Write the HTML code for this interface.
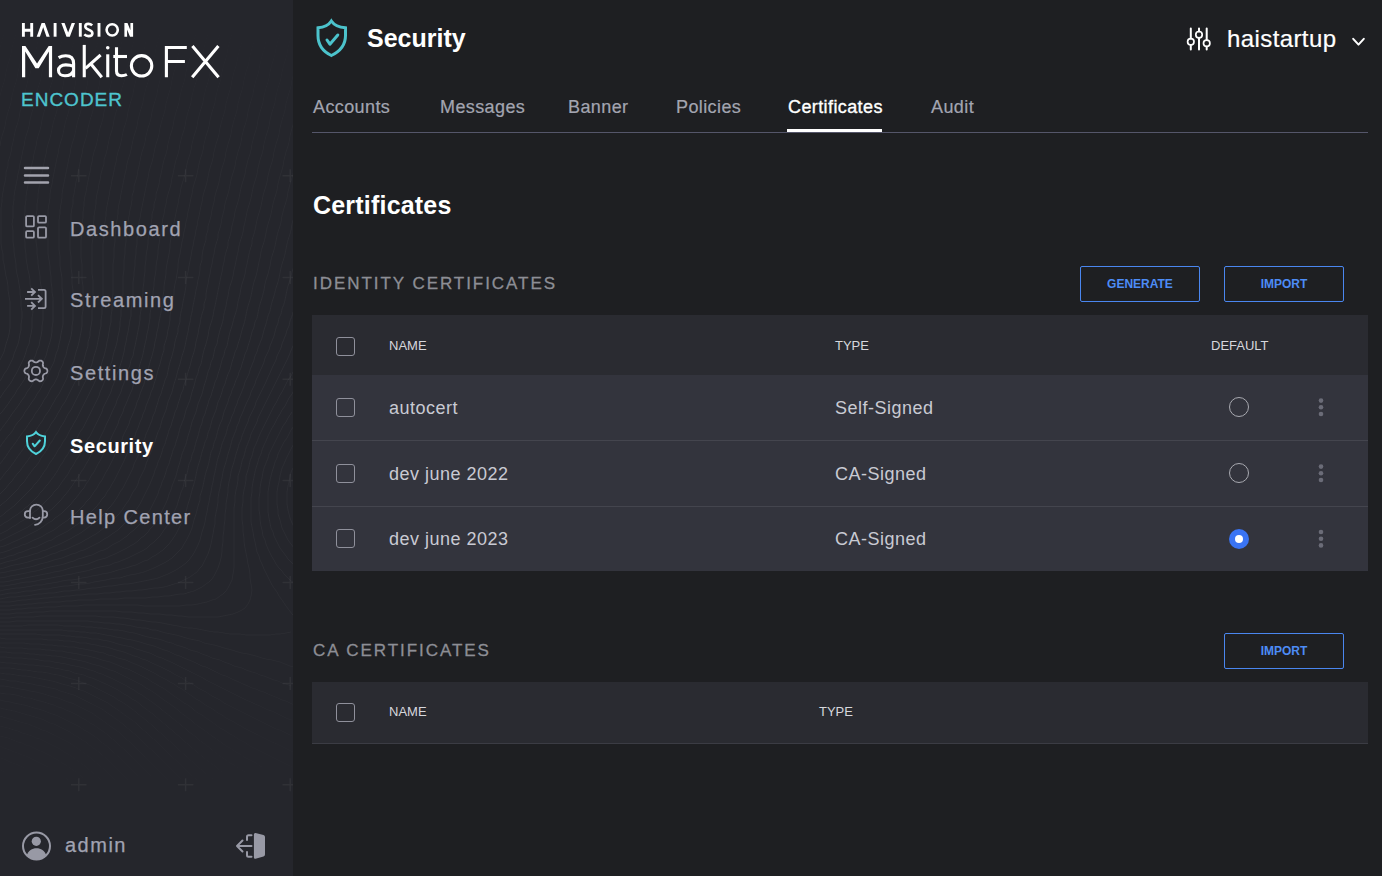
<!DOCTYPE html>
<html><head><meta charset="utf-8">
<style>
*{margin:0;padding:0;box-sizing:border-box;}
html,body{width:1382px;height:876px;overflow:hidden;background:#1e1f22;font-family:"Liberation Sans",sans-serif;}
.abs{position:absolute;}
#side{position:absolute;left:0;top:0;width:293px;height:876px;background:#25262c;overflow:hidden;}
.t{position:absolute;white-space:nowrap;line-height:1;}
.nav{color:#a1a3b2;font-size:20px;letter-spacing:1.6px;-webkit-text-stroke:0.25px #a1a3b2;}
.tab{color:#a3a5b1;font-size:18px;letter-spacing:0.4px;top:97.7px;-webkit-text-stroke:0.2px #a3a5b1;}
.hdr{color:#d6d7dd;font-size:13px;}
.cell{color:#c9cad3;font-size:18px;letter-spacing:0.5px;}
.cb{position:absolute;width:19px;height:19px;border:1.5px solid #8f909b;border-radius:3px;}
.btn{position:absolute;height:36px;border:1px solid #4a86ef;border-radius:2px;color:#4d8cf6;font-size:12px;font-weight:bold;text-align:center;line-height:34px;}
.sec{color:#8d8e95;font-size:17px;letter-spacing:1.95px;-webkit-text-stroke:0.3px #8d8e95;}
.radio{position:absolute;width:20px;height:20px;border-radius:50%;border:1.5px solid #a9aab1;}
</style></head>
<body>
<div id="side">
  <svg class="abs" style="left:0;top:0;" width="293" height="876" viewBox="0 0 293 876" fill="none">
    <defs><linearGradient id="tg" x1="0" y1="0" x2="0" y2="1"><stop offset="0" stop-color="#fff" stop-opacity="0"/><stop offset="0.17" stop-color="#fff" stop-opacity="0.6"/><stop offset="0.4" stop-color="#fff" stop-opacity="1"/><stop offset="0.7" stop-color="#fff" stop-opacity="0.8"/><stop offset="0.9" stop-color="#fff" stop-opacity="0.1"/><stop offset="1" stop-color="#fff" stop-opacity="0"/></linearGradient><mask id="tm"><rect width="293" height="876" fill="url(#tg)"/></mask></defs>
    <path d="M0 48 L1 44 L2 40 L4 34 L5 30 L6 24 L7 20 L8 16 L10 10 L11 6 L12 0 M0 96 L1 92 L2 88 L4 82 L5 78 L6 72 L7 68 L8 64 L10 58 L11 54 L12 48 L13 44 L14 40 L16 34 L17 30 L18 24 L19 20 L20 16 L22 10 L23 6 L24 0 M0 146 L1 140 L2 136 L4 130 L5 126 L6 120 L7 116 L8 112 L10 106 L11 102 L12 96 L13 92 L14 88 L16 82 L17 78 L18 72 L19 68 L20 64 L22 58 L23 54 L24 48 L25 44 L26 40 L28 34 L29 30 L30 24 L31 20 L32 16 L34 10 L35 6 L36 0 M0 360 L2 356 L4 352 L5 348 L6 344 L8 338 L9 334 L10 328 L10 324 L10 318 L10 312 L10 306 L10 302 L9 296 L8 290 L8 286 L7 280 L6 276 L5 270 L4 264 L3 260 L3 254 L2 250 L1 244 L1 238 L1 232 L1 226 L1 220 L1 214 L1 208 L2 202 L2 198 L3 192 L4 186 L5 182 L6 176 L6 172 L8 166 L8 162 L10 156 L11 152 L12 146 L13 142 L14 137 L15 132 L16 128 L18 122 L19 118 L20 112 L21 108 L22 104 L24 98 L25 94 L26 88 L27 84 L28 80 L30 74 L31 70 L32 64 L33 60 L34 56 L36 50 L37 46 L38 40 L39 36 L40 32 L42 26 L43 22 L44 16 L45 12 L46 8 L48 2 M0 381 L2 378 L4 374 L7 370 L9 366 L11 362 L13 358 L14 354 L16 349 L18 344 L19 340 L20 334 L21 330 L21 324 L22 318 L22 312 L21 306 L21 300 L20 294 L20 290 L19 284 L18 278 L17 274 L16 268 L16 264 L15 258 L14 252 L14 248 L13 242 L13 236 L13 230 L12 224 L13 218 L13 212 L13 206 L14 200 L14 196 L15 190 L16 185 L17 180 L18 174 L19 170 L20 164 L21 160 L22 155 L23 150 L24 146 L25 140 L26 136 L28 130 L29 126 L30 120 L31 116 L32 112 L34 106 L35 102 L36 96 L37 92 L38 88 L40 82 L41 78 L42 72 L43 68 L44 64 L46 58 L47 54 L48 48 L49 44 L50 40 L52 34 L53 30 L54 24 L55 20 L56 16 L58 10 L59 6 L60 0 M0 398 L2 395 L4 392 L7 388 L10 384 L12 381 L14 377 L16 374 L18 370 L20 366 L22 362 L24 358 L26 352 L27 348 L29 344 L30 338 L31 334 L32 328 L32 324 L32 318 L33 312 L32 306 L32 301 L32 296 L31 290 L30 284 L30 280 L29 274 L28 270 L27 264 L26 258 L26 254 L25 248 L25 242 L24 236 L24 230 L24 224 L24 218 L25 212 L25 206 L26 200 L26 196 L27 190 L28 185 L29 180 L30 174 L31 170 L32 164 L33 160 L34 154 L35 150 L36 146 L37 140 L38 136 L40 130 L41 126 L42 120 L43 116 L44 112 L46 106 L47 102 L48 96 L49 92 L50 88 L52 82 L53 78 L54 72 L55 68 L56 64 L58 58 L59 54 L60 48 L61 44 L62 40 L64 34 L65 30 L66 24 L67 20 L68 16 L70 10 L71 6 L72 0 M0 414 L2 412 L5 408 L8 404 L10 401 L12 398 L15 394 L17 390 L20 386 L22 383 L24 380 L26 376 L28 372 L30 368 L32 364 L34 359 L36 354 L37 350 L39 346 L40 340 L41 336 L42 330 L42 326 L43 320 L43 314 L43 308 L43 302 L42 296 L42 292 L41 286 L40 280 L40 276 L39 270 L38 264 L38 260 L37 254 L37 248 L36 242 L36 236 L36 232 L36 226 L36 222 L36 216 L37 210 L37 204 L38 198 L38 194 L39 188 L40 184 L41 178 L42 173 L43 168 L44 163 L45 158 L46 154 L47 148 L48 144 L50 138 L51 134 L52 129 L53 124 L54 120 L56 114 L57 110 L58 104 L59 100 L60 96 L62 90 L63 86 L64 80 L65 76 L66 72 L68 66 L69 62 L70 56 L71 52 L72 48 L74 42 L75 38 L76 32 L77 28 L78 24 L80 18 L81 14 L82 8 L83 4 L84 0 M0 431 L2 428 L5 424 L8 420 L10 417 L12 414 L15 410 L18 406 L20 403 L22 400 L25 396 L27 392 L30 388 L32 385 L34 381 L36 378 L38 374 L40 370 L42 365 L44 360 L46 356 L47 352 L48 348 L50 342 L51 338 L52 332 L52 328 L53 322 L53 316 L53 310 L53 304 L53 298 L52 292 L52 288 L51 282 L51 276 L50 270 L50 266 L49 260 L48 254 L48 248 L48 244 L48 238 L47 232 L48 226 L48 220 L48 216 L48 210 L49 204 L50 198 L50 194 L51 188 L52 184 L53 178 L54 173 L55 168 L56 163 L57 158 L58 154 L59 148 L60 144 L62 138 L63 134 L64 129 L65 124 L66 120 L68 114 L69 110 L70 104 L71 100 L72 96 L74 90 L75 86 L76 80 L77 76 L78 72 L80 66 L81 62 L82 56 L83 52 L84 48 L86 42 L87 38 L88 32 L89 28 L90 24 L92 18 L93 14 L94 8 L95 4 L96 0 M0 447 L2 444 L5 440 L8 436 L10 434 L13 430 L15 426 L18 422 L20 420 L23 416 L25 412 L28 408 L30 405 L32 402 L35 398 L37 394 L40 390 L42 386 L44 382 L46 379 L48 375 L50 370 L52 366 L54 362 L55 358 L56 354 L58 349 L59 344 L60 340 L61 334 L62 329 L63 324 L63 318 L63 312 L63 306 L63 300 L63 294 L62 288 L62 283 L62 278 L61 272 L60 266 L60 260 L60 256 L59 250 L59 244 L59 238 L59 232 L59 226 L59 220 L60 214 L60 210 L61 204 L62 198 L62 194 L63 188 L64 183 L65 178 L66 173 L67 168 L68 163 L69 158 L70 154 L71 148 L72 144 L74 138 L75 134 L76 129 L77 124 L78 120 L80 114 L81 110 L82 104 L83 100 L84 96 L86 90 L87 86 L88 80 L89 76 L90 72 L92 66 L93 62 L94 56 L95 52 L96 48 L98 42 L99 38 L100 32 L101 28 L102 24 L104 18 L105 14 L106 8 L107 4 L108 0 M0 464 L3 460 L6 456 L8 453 L10 450 L13 446 L16 442 L18 439 L20 436 L23 432 L26 428 L28 425 L30 422 L33 418 L35 414 L38 410 L40 407 L42 404 L44 400 L47 396 L49 392 L51 388 L54 384 L56 380 L58 376 L59 372 L61 368 L63 364 L64 360 L66 355 L67 350 L68 346 L70 340 L71 336 L72 330 L72 326 L73 320 L73 314 L73 308 L73 302 L73 296 L73 290 L72 284 L72 279 L72 274 L71 268 L71 262 L71 256 L70 250 L70 244 L70 238 L70 232 L71 226 L71 220 L71 214 L72 208 L73 204 L73 198 L74 194 L75 188 L76 182 L77 178 L78 172 L79 168 L80 163 L81 158 L82 154 L83 148 L84 144 L86 138 L87 134 L88 128 L89 124 L90 120 L92 114 L93 110 L94 104 L95 100 L96 96 L98 90 L99 86 L100 80 L101 76 L102 72 L104 66 L105 62 L106 56 L107 52 L108 48 L110 42 L111 38 L112 32 L113 28 L114 24 L116 18 L117 14 L118 8 L119 4 L120 0 M0 480 L3 476 L6 472 L8 470 L11 466 L14 462 L16 459 L18 456 L21 452 L24 448 L26 445 L28 442 L31 438 L33 434 L36 430 L38 427 L40 424 L43 420 L45 416 L48 412 L50 409 L52 405 L54 402 L56 398 L59 394 L61 390 L63 386 L65 382 L67 378 L68 374 L70 370 L72 365 L74 360 L75 356 L76 352 L78 346 L79 342 L80 337 L81 332 L82 326 L82 322 L82 316 L83 310 L83 304 L83 298 L83 292 L83 286 L82 280 L82 274 L82 270 L82 264 L81 258 L81 252 L81 246 L81 240 L82 234 L82 228 L82 224 L83 218 L83 212 L84 206 L84 202 L85 196 L86 192 L87 186 L88 181 L89 176 L90 172 L91 166 L92 162 L93 156 L94 152 L96 146 L97 142 L98 137 L99 132 L100 128 L102 122 L103 118 L104 112 L105 108 L106 104 L108 98 L109 94 L110 88 L111 84 L112 80 L114 74 L115 70 L116 64 L117 60 L118 56 L120 50 L121 46 L122 40 L123 36 L124 32 L126 26 L127 22 L128 16 L129 12 L130 8 L132 2 M0 494 L4 490 L6 488 L9 484 L12 481 L14 478 L17 474 L20 471 L22 468 L25 464 L28 460 L30 457 L32 454 L35 450 L37 446 L40 442 L42 439 L44 436 L46 432 L49 428 L51 424 L54 420 L56 417 L58 413 L60 410 L62 406 L65 402 L67 398 L69 394 L71 390 L73 386 L75 382 L77 378 L78 374 L80 370 L82 365 L84 360 L85 356 L86 352 L88 346 L88 342 L90 336 L90 332 L91 326 L92 320 L92 316 L92 310 L93 304 L93 298 L93 292 L93 286 L93 280 L92 274 L92 268 L92 262 L92 256 L92 250 L92 244 L93 238 L93 232 L93 226 L94 220 L94 216 L95 210 L96 204 L96 200 L97 194 L98 190 L99 184 L100 180 L101 174 L102 170 L104 164 L104 160 L106 154 L107 150 L108 145 L109 140 L110 136 L112 130 L113 126 L114 120 L115 116 L116 112 L118 106 L119 102 L120 96 L121 92 L122 88 L124 82 L125 78 L126 72 L127 68 L128 64 L130 58 L131 54 L132 48 L133 44 L134 40 L136 34 L137 30 L138 24 L139 20 L140 16 L142 10 L143 6 L144 0 M0 506 L2 504 L6 501 L9 498 L12 495 L15 492 L18 489 L20 486 L24 482 L26 479 L28 476 L31 472 L34 468 L36 466 L39 462 L41 458 L44 454 L46 451 L48 448 L50 444 L53 440 L55 436 L58 432 L60 428 L62 425 L64 422 L66 418 L68 414 L71 410 L73 406 L75 402 L77 398 L79 394 L81 390 L83 386 L85 382 L87 378 L88 374 L90 369 L92 364 L93 360 L94 356 L96 350 L97 346 L98 341 L99 336 L100 330 L101 326 L101 320 L102 314 L102 310 L102 304 L103 298 L103 292 L103 286 L103 280 L103 274 L103 268 L103 262 L103 256 L103 250 L103 244 L104 238 L104 234 L104 228 L105 222 L106 216 L106 212 L107 206 L108 201 L109 196 L110 190 L111 186 L112 180 L113 176 L114 171 L115 166 L116 162 L117 156 L118 152 L120 146 L121 142 L122 137 L123 132 L124 128 L126 122 L127 118 L128 112 L129 108 L130 104 L132 98 L133 94 L134 88 L135 84 L136 80 L138 74 L139 70 L140 64 L141 60 L142 56 L144 50 L145 46 L146 40 L147 36 L148 32 L150 26 L151 22 L152 16 L153 12 L154 8 L156 2 M0 517 L4 514 L6 512 L10 509 L14 506 L16 504 L20 500 L22 498 L26 494 L28 492 L32 488 L34 485 L37 482 L40 478 L42 475 L44 472 L47 468 L49 464 L52 460 L54 457 L56 454 L58 450 L61 446 L63 442 L66 438 L68 434 L70 430 L72 427 L74 423 L76 420 L78 416 L80 412 L82 408 L84 404 L86 400 L88 396 L90 392 L92 388 L94 384 L96 379 L98 374 L99 370 L101 366 L102 362 L104 356 L105 352 L106 348 L107 342 L108 338 L109 332 L110 326 L111 322 L111 316 L112 310 L112 306 L112 300 L113 294 L113 288 L113 282 L113 276 L113 270 L113 264 L114 258 L114 252 L114 248 L115 242 L115 236 L116 230 L116 226 L117 220 L118 214 L118 210 L119 204 L120 200 L121 194 L122 189 L123 184 L124 179 L125 174 L126 170 L127 164 L128 160 L130 154 L131 150 L132 145 L133 140 L134 136 L136 130 L137 126 L138 120 L139 116 L140 112 L142 106 L143 102 L144 96 L145 92 L146 88 L148 82 L149 78 L150 72 L151 68 L152 64 L154 58 L155 54 L156 48 L157 44 L158 40 L160 34 L161 30 L162 24 L163 20 L164 16 L166 10 L167 6 L168 0 M0 526 L4 523 L8 521 L12 518 L15 516 L18 514 L22 511 L25 508 L28 506 L32 502 L34 500 L38 496 L40 493 L43 490 L46 486 L48 484 L51 480 L54 476 L56 473 L58 470 L60 466 L63 462 L65 458 L68 454 L70 450 L72 447 L74 443 L76 440 L78 436 L80 432 L83 428 L85 424 L87 420 L89 416 L91 412 L93 408 L95 404 L97 400 L99 396 L100 392 L102 388 L104 383 L106 378 L108 374 L109 370 L110 366 L112 361 L113 356 L114 352 L116 346 L117 342 L118 336 L119 332 L120 326 L120 322 L121 316 L121 310 L122 304 L122 300 L123 294 L123 288 L123 282 L123 276 L124 270 L124 265 L124 260 L125 254 L125 248 L126 242 L126 238 L127 232 L127 226 L128 222 L129 216 L130 210 L131 206 L132 200 L132 196 L134 190 L134 186 L136 180 L137 176 L138 170 L139 166 L140 161 L141 156 L142 152 L144 146 L145 142 L146 136 L147 132 L148 128 L150 122 L151 118 L152 112 L153 108 L154 104 L156 98 L157 94 L158 88 L159 84 L160 80 L162 74 L163 70 L164 64 L165 60 L166 56 L168 50 L169 46 L170 40 L171 36 L172 32 L174 26 L175 22 L176 16 L177 12 L178 8 L180 2 M0 534 L4 532 L8 530 L12 527 L16 525 L20 522 L24 520 L27 518 L30 515 L34 512 L37 510 L40 507 L43 504 L46 501 L49 498 L52 495 L54 492 L58 488 L60 485 L62 482 L65 478 L68 474 L70 470 L72 467 L74 464 L76 460 L79 456 L81 452 L83 448 L85 444 L87 440 L90 436 L92 432 L94 428 L96 424 L98 420 L100 416 L102 412 L103 408 L105 404 L107 400 L109 396 L111 392 L112 388 L114 383 L116 378 L117 374 L119 370 L120 366 L122 360 L123 356 L124 352 L125 346 L126 342 L127 336 L128 332 L129 326 L130 320 L131 316 L131 310 L132 304 L132 300 L133 294 L133 288 L133 282 L134 276 L134 272 L135 266 L135 260 L136 254 L136 249 L137 244 L137 238 L138 232 L139 228 L139 222 L140 218 L141 212 L142 207 L143 202 L144 197 L145 192 L146 187 L147 182 L148 178 L149 172 L150 168 L152 162 L153 158 L154 153 L155 148 L156 144 L158 138 L159 134 L160 128 L161 124 L162 120 L164 114 L165 110 L166 104 L167 100 L168 96 L170 90 L171 86 L172 80 L173 76 L174 72 L176 66 L177 62 L178 56 L179 52 L180 48 L182 42 L183 38 L184 32 L185 28 L186 24 L188 18 L189 14 L190 8 L191 4 L192 0 M0 541 L4 539 L8 537 L12 535 L16 533 L20 531 L24 529 L28 527 L32 524 L35 522 L38 520 L42 517 L46 514 L48 512 L52 509 L55 506 L58 503 L61 500 L64 496 L66 494 L69 490 L72 486 L74 483 L76 480 L79 476 L81 472 L84 468 L86 464 L88 461 L90 457 L92 453 L94 449 L96 446 L98 442 L100 438 L102 434 L104 430 L106 425 L108 421 L110 417 L112 412 L114 408 L116 404 L117 400 L119 396 L121 392 L122 388 L124 383 L126 378 L127 374 L128 370 L130 365 L131 360 L133 356 L134 350 L135 346 L136 341 L137 336 L138 331 L139 326 L140 320 L140 316 L141 310 L142 304 L142 300 L143 294 L143 288 L144 282 L144 278 L145 272 L145 266 L146 260 L146 256 L147 250 L148 244 L148 240 L149 234 L150 228 L151 224 L152 218 L152 214 L154 208 L154 204 L156 198 L156 194 L158 188 L159 184 L160 178 L161 174 L162 169 L163 164 L164 160 L166 154 L167 150 L168 144 L169 140 L170 136 L172 130 L173 126 L174 120 L175 116 L176 112 L178 106 L179 102 L180 96 L181 92 L182 88 L184 82 L185 78 L186 72 L187 68 L188 64 L190 58 L191 54 L192 48 L193 44 L194 40 L196 34 L197 30 L198 24 L199 20 L200 16 L202 10 L203 6 L204 0 M0 547 L4 546 L9 544 L13 542 L18 540 L22 538 L26 536 L30 534 L34 532 L38 530 L41 528 L44 526 L48 523 L52 521 L55 518 L58 516 L62 513 L65 510 L68 507 L71 504 L74 500 L76 498 L79 494 L82 490 L84 488 L86 484 L89 480 L91 476 L94 472 L96 468 L98 464 L100 461 L102 457 L104 453 L106 449 L108 445 L110 441 L112 436 L114 432 L116 428 L118 424 L119 420 L121 416 L123 412 L124 408 L126 404 L128 399 L130 394 L132 390 L133 386 L134 382 L136 377 L138 372 L139 368 L140 364 L142 358 L143 354 L144 349 L145 344 L146 340 L147 334 L148 330 L149 324 L150 318 L150 314 L151 308 L152 302 L153 298 L153 292 L154 286 L154 282 L155 276 L156 270 L156 266 L157 260 L158 254 L158 250 L159 244 L160 238 L161 234 L162 228 L162 224 L163 218 L164 214 L165 208 L166 204 L167 198 L168 194 L170 188 L171 184 L172 178 L173 174 L174 169 L175 164 L176 160 L178 154 L179 150 L180 144 L181 140 L182 136 L184 130 L185 126 L186 120 L187 116 L188 112 L190 106 L191 102 L192 96 L193 92 L194 88 L196 82 L197 78 L198 72 L199 68 L200 64 L202 58 L203 54 L204 48 L205 44 L206 40 L208 34 L209 30 L210 24 L211 20 L212 16 L214 10 L215 6 L216 0 M0 553 L4 552 L10 550 L14 548 L18 547 L22 545 L26 544 L30 542 L34 540 L39 538 L43 536 L46 534 L50 532 L54 530 L58 527 L62 524 L65 522 L68 520 L72 516 L75 514 L78 511 L81 508 L84 505 L86 502 L90 498 L92 495 L94 492 L97 488 L99 484 L102 480 L104 476 L106 472 L108 469 L110 465 L112 461 L114 457 L116 452 L118 448 L120 444 L122 440 L123 436 L125 432 L127 428 L129 424 L130 420 L132 416 L134 411 L136 406 L137 402 L139 398 L140 394 L142 389 L144 384 L145 380 L146 376 L148 371 L149 366 L150 362 L152 356 L153 352 L154 348 L155 342 L156 338 L157 332 L158 328 L159 322 L160 317 L161 312 L162 306 L162 302 L163 296 L164 290 L164 286 L165 280 L166 274 L166 270 L167 264 L168 259 L169 254 L170 248 L170 244 L171 238 L172 234 L173 228 L174 223 L175 218 L176 213 L177 208 L178 204 L179 198 L180 194 L181 188 L182 184 L184 178 L185 174 L186 169 L187 164 L188 160 L190 154 L191 150 L192 144 L193 140 L194 136 L196 130 L197 126 L198 120 L199 116 L200 112 L202 106 L203 102 L204 96 L205 92 L206 88 L208 82 L209 78 L210 72 L211 68 L212 64 L214 58 L215 54 L216 48 L217 44 L218 40 L220 34 L221 30 L222 24 L223 20 L224 16 L226 10 L227 6 L228 0 M0 559 L4 558 L9 556 L14 555 L18 553 L22 552 L27 550 L32 548 L36 547 L40 545 L44 543 L48 541 L52 540 L56 537 L60 535 L64 533 L68 531 L72 528 L75 526 L78 524 L82 521 L85 518 L88 515 L91 512 L94 509 L97 506 L100 502 L102 499 L105 496 L107 492 L110 488 L112 484 L114 481 L116 477 L118 473 L120 469 L122 465 L124 461 L126 456 L128 452 L130 448 L131 444 L133 440 L135 436 L136 432 L138 428 L140 422 L142 418 L143 414 L145 410 L146 406 L148 401 L150 396 L151 392 L153 388 L154 384 L156 378 L157 374 L158 370 L160 364 L161 360 L162 356 L164 350 L164 346 L166 340 L167 336 L168 330 L169 326 L170 320 L170 316 L171 310 L172 306 L173 300 L174 294 L174 290 L175 284 L176 280 L177 274 L178 268 L178 264 L179 258 L180 254 L181 248 L182 242 L183 238 L184 232 L185 228 L186 222 L187 218 L188 212 L189 208 L190 203 L191 198 L192 194 L193 188 L194 184 L196 178 L197 174 L198 169 L199 164 L200 160 L202 154 L203 150 L204 144 L205 140 L206 136 L208 130 L209 126 L210 120 L211 116 L212 112 L214 106 L215 102 L216 96 L217 92 L218 88 L220 82 L221 78 L222 72 L223 68 L224 64 L226 58 L227 54 L228 48 L229 44 L230 40 L232 34 L233 30 L234 24 L235 20 L236 16 L238 10 L239 6 L240 0 M0 564 L6 562 L10 561 L15 560 L20 558 L24 557 L28 556 L34 554 L38 553 L42 551 L46 550 L50 548 L55 546 L60 544 L64 542 L68 540 L72 538 L75 536 L79 534 L82 532 L86 529 L90 526 L93 524 L96 522 L100 518 L102 516 L106 512 L108 509 L111 506 L114 502 L116 499 L118 496 L120 492 L123 488 L125 484 L127 480 L129 476 L131 472 L133 468 L134 464 L136 460 L138 456 L140 451 L142 446 L143 442 L145 438 L146 434 L148 430 L150 425 L152 420 L153 416 L155 412 L156 408 L158 402 L159 398 L161 394 L162 390 L164 384 L165 380 L167 376 L168 371 L169 366 L170 362 L172 356 L173 352 L174 348 L175 342 L176 338 L178 332 L178 328 L180 322 L180 318 L181 312 L182 308 L183 302 L184 297 L185 292 L186 286 L186 282 L187 276 L188 272 L189 266 L190 261 L191 256 L192 250 L193 246 L194 240 L195 236 L196 230 L197 226 L198 220 L199 216 L200 211 L201 206 L202 202 L203 196 L204 192 L206 186 L207 182 L208 177 L209 172 L210 168 L212 162 L213 158 L214 152 L215 148 L216 144 L218 138 L219 134 L220 128 L221 124 L222 120 L224 114 L225 110 L226 104 L227 100 L228 96 L230 90 L231 86 L232 80 L233 76 L234 72 L236 66 L237 62 L238 56 L239 52 L240 48 L242 42 L243 38 L244 32 L245 28 L246 24 L248 18 L249 14 L250 8 L251 4 L252 0 M0 569 L4 568 L10 566 L14 565 L20 564 L24 563 L28 562 L34 560 L38 559 L42 558 L47 556 L52 554 L56 553 L60 551 L64 550 L69 548 L73 546 L78 544 L82 542 L85 540 L89 538 L92 536 L96 534 L100 531 L104 528 L106 526 L110 523 L113 520 L116 517 L119 514 L122 510 L124 507 L126 504 L129 500 L131 496 L133 492 L136 488 L138 484 L139 480 L141 476 L143 472 L145 468 L146 464 L148 459 L150 454 L152 450 L153 446 L155 442 L156 438 L158 432 L160 428 L161 424 L162 420 L164 415 L166 410 L167 406 L168 402 L170 397 L172 392 L173 388 L174 384 L176 378 L177 374 L178 370 L180 364 L181 360 L182 356 L184 350 L185 346 L186 341 L187 336 L188 332 L189 326 L190 322 L191 316 L192 312 L193 306 L194 301 L195 296 L196 290 L197 286 L198 280 L199 276 L200 270 L200 266 L202 260 L202 256 L203 250 L204 246 L206 240 L206 236 L208 230 L208 226 L210 220 L211 216 L212 210 L213 206 L214 202 L215 196 L216 192 L218 186 L219 182 L220 177 L221 172 L222 168 L224 162 L225 158 L226 152 L227 148 L228 144 L230 138 L231 134 L232 128 L233 124 L234 120 L236 114 L237 110 L238 104 L239 100 L240 96 L242 90 L243 86 L244 80 L245 76 L246 72 L248 66 L249 62 L250 56 L251 52 L252 48 L254 42 L255 38 L256 32 L257 28 L258 24 L260 18 L261 14 L262 8 L263 4 L264 0 M0 573 L6 572 L10 571 L16 570 L20 569 L25 568 L30 567 L34 566 L40 564 L44 563 L48 562 L54 560 L58 559 L62 558 L67 556 L72 554 L76 553 L80 551 L84 550 L88 548 L92 546 L96 544 L100 542 L104 539 L108 537 L112 534 L115 532 L118 530 L122 526 L124 524 L128 520 L130 518 L133 514 L136 510 L138 507 L140 504 L142 500 L144 496 L146 492 L148 488 L150 484 L152 479 L154 474 L155 470 L157 466 L158 462 L160 458 L162 452 L163 448 L165 444 L166 440 L168 434 L169 430 L171 426 L172 422 L174 416 L175 412 L177 408 L178 404 L180 398 L181 394 L183 390 L184 385 L186 380 L187 376 L188 372 L190 366 L191 362 L192 358 L194 352 L195 348 L196 342 L197 338 L198 334 L199 328 L200 324 L201 318 L202 314 L204 308 L204 304 L206 298 L206 294 L207 288 L208 284 L209 278 L210 274 L211 268 L212 264 L213 258 L214 254 L215 248 L216 244 L218 238 L218 234 L220 228 L221 224 L222 218 L223 214 L224 210 L225 204 L226 200 L228 194 L229 190 L230 185 L231 180 L232 176 L234 170 L235 166 L236 160 L237 156 L238 152 L240 146 L241 142 L242 136 L243 132 L244 128 L246 122 L247 118 L248 112 L249 108 L250 104 L252 98 L253 94 L254 88 L255 84 L256 80 L258 74 L259 70 L260 64 L261 60 L262 56 L264 50 L265 46 L266 40 L267 36 L268 32 L270 26 L271 22 L272 16 L273 12 L274 8 L276 2 M0 578 L6 577 L10 576 L16 575 L21 574 L26 573 L30 572 L36 571 L40 570 L46 568 L50 567 L55 566 L60 565 L64 564 L70 562 L74 561 L78 559 L82 558 L88 556 L92 555 L96 553 L100 551 L104 550 L108 548 L112 545 L116 543 L120 541 L124 538 L127 536 L130 533 L134 530 L136 528 L140 524 L142 521 L144 518 L147 514 L150 510 L152 506 L154 502 L156 498 L158 494 L159 490 L161 486 L162 482 L164 478 L166 472 L167 468 L169 464 L170 460 L172 454 L173 450 L175 446 L176 442 L178 436 L179 432 L180 428 L182 423 L184 418 L185 414 L186 410 L188 405 L190 400 L191 396 L192 392 L194 386 L195 382 L196 378 L198 373 L199 368 L201 364 L202 359 L203 354 L204 350 L206 344 L207 340 L208 336 L209 330 L210 326 L212 320 L213 316 L214 310 L215 306 L216 301 L217 296 L218 291 L219 286 L220 281 L221 276 L222 272 L223 266 L224 262 L225 256 L226 252 L228 246 L228 242 L230 236 L231 232 L232 226 L233 222 L234 218 L235 212 L236 208 L238 202 L239 198 L240 193 L241 188 L242 184 L244 178 L245 174 L246 168 L247 164 L248 160 L250 154 L251 150 L252 144 L253 140 L254 136 L256 130 L257 126 L258 120 L259 116 L260 112 L262 106 L263 102 L264 96 L265 92 L266 88 L268 82 L269 78 L270 72 L271 68 L272 64 L274 58 L275 54 L276 48 L277 44 L278 40 L280 34 L281 30 L282 24 L283 20 L284 16 L286 10 L287 6 L288 0 M0 582 L4 582 L10 581 L14 580 L20 579 L25 578 L30 577 L35 576 L40 575 L45 574 L50 573 L54 572 L60 571 L64 570 L70 568 L74 567 L79 566 L84 565 L88 564 L93 562 L98 560 L102 559 L106 558 L110 556 L115 554 L119 552 L123 550 L127 548 L130 546 L134 544 L138 541 L141 538 L144 536 L148 532 L150 529 L153 526 L156 522 L158 518 L160 515 L162 511 L164 507 L166 503 L168 498 L169 494 L171 490 L172 486 L174 481 L176 476 L177 472 L178 468 L180 462 L181 458 L182 454 L184 449 L186 444 L187 440 L188 436 L190 430 L191 426 L192 422 L194 417 L196 412 L197 408 L198 404 L200 399 L202 394 L203 390 L204 386 L206 380 L207 376 L208 372 L210 367 L211 362 L213 358 L214 353 L215 348 L217 344 L218 338 L219 334 L220 330 L222 324 L223 320 L224 314 L225 310 L226 306 L227 300 L228 296 L229 290 L230 286 L232 280 L233 276 L234 270 L235 266 L236 261 L237 256 L238 252 L239 246 L240 242 L242 236 L243 232 L244 226 L245 222 L246 217 L247 212 L248 208 L250 202 L251 198 L252 193 L253 188 L254 184 L256 178 L257 174 L258 168 L259 164 L260 160 L262 154 L263 150 L264 144 L265 140 L266 136 L268 130 L269 126 L270 120 L271 116 L272 112 L274 106 L275 102 L276 96 L277 92 L278 88 L280 82 L281 78 L282 72 L283 68 L284 64 L286 58 L287 54 L288 48 L289 44 L290 40 L292 34 L293 30 L294 24 M0 586 L4 586 L10 585 L16 584 L20 583 L26 582 L30 582 L36 581 L40 580 L46 579 L51 578 L56 577 L62 576 L66 575 L72 574 L76 573 L81 572 L86 571 L90 570 L96 568 L100 567 L105 566 L110 565 L114 563 L118 562 L123 560 L128 558 L132 556 L136 554 L140 552 L144 550 L147 548 L150 545 L154 542 L156 540 L160 536 L162 533 L164 530 L167 526 L169 522 L171 518 L173 514 L175 510 L177 506 L178 502 L180 496 L181 492 L183 488 L184 483 L185 478 L187 474 L188 469 L189 464 L191 460 L192 455 L194 450 L195 446 L196 442 L198 436 L199 432 L200 428 L202 423 L203 418 L205 414 L206 410 L208 404 L209 400 L211 396 L212 392 L214 386 L215 382 L217 378 L218 374 L220 368 L221 364 L222 360 L224 355 L225 350 L227 346 L228 341 L229 336 L230 332 L232 326 L233 322 L234 318 L236 312 L237 308 L238 302 L239 298 L240 294 L241 288 L242 284 L244 278 L245 274 L246 268 L247 264 L248 259 L249 254 L250 250 L252 244 L252 240 L254 234 L255 230 L256 225 L257 220 L258 216 L260 210 L261 206 L262 201 L263 196 L264 192 L266 186 L267 182 L268 176 L269 172 L270 168 L272 162 L273 158 L274 152 L275 148 L276 144 L278 138 L279 134 L280 128 L281 124 L282 120 L284 114 L285 110 L286 104 L287 100 L288 96 L290 90 L291 86 L292 80 L293 76 M0 591 L4 590 L10 589 L16 588 L20 588 L26 587 L32 586 L36 585 L42 585 L46 584 L52 583 L58 582 L62 581 L68 580 L72 580 L78 579 L82 578 L88 577 L92 576 L98 575 L102 574 L108 573 L112 572 L118 570 L122 569 L126 568 L132 566 L136 565 L140 563 L144 561 L148 560 L152 557 L156 555 L160 552 L163 550 L166 547 L169 544 L172 540 L174 537 L176 534 L178 530 L180 526 L182 522 L184 517 L186 512 L187 508 L188 504 L190 498 L191 494 L192 490 L194 484 L195 480 L196 475 L197 470 L198 466 L200 460 L201 456 L202 452 L204 446 L205 442 L207 438 L208 433 L210 428 L211 424 L212 420 L214 415 L216 410 L217 406 L218 402 L220 398 L222 392 L223 388 L225 384 L226 380 L228 374 L230 370 L231 366 L232 362 L234 356 L235 352 L237 348 L238 344 L240 338 L241 334 L242 330 L244 324 L245 320 L246 315 L247 310 L248 306 L250 300 L251 296 L252 291 L253 286 L254 282 L256 276 L257 272 L258 267 L259 262 L260 258 L261 252 L262 248 L264 242 L265 238 L266 233 L267 228 L268 224 L270 218 L271 214 L272 209 L273 204 L274 200 L276 194 L277 190 L278 184 L279 180 L280 176 L282 170 L283 166 L284 160 L285 156 L286 152 L288 146 L289 142 L290 136 L291 132 L292 128 L294 122 M0 595 L5 594 L10 593 L16 593 L21 592 L26 591 L32 591 L37 590 L42 589 L48 589 L52 588 L58 587 L64 586 L68 586 L74 585 L80 584 L84 584 L90 583 L94 582 L100 581 L106 580 L110 579 L116 578 L120 578 L126 576 L130 575 L136 574 L140 573 L144 572 L149 570 L154 568 L158 566 L162 564 L166 562 L169 560 L172 558 L176 554 L178 552 L182 548 L184 544 L186 541 L188 537 L190 533 L192 528 L193 524 L194 520 L196 514 L197 510 L198 506 L200 500 L200 496 L202 490 L203 486 L204 481 L205 476 L206 472 L208 466 L209 462 L210 457 L211 452 L213 448 L214 443 L216 438 L217 434 L218 430 L220 424 L222 420 L223 416 L224 412 L226 407 L228 402 L229 398 L231 394 L232 390 L234 386 L236 380 L238 376 L239 372 L241 368 L242 364 L244 358 L245 354 L247 350 L248 346 L250 340 L251 336 L252 332 L254 327 L255 322 L257 318 L258 313 L259 308 L260 304 L262 298 L263 294 L264 290 L265 284 L266 280 L268 274 L269 270 L270 266 L271 260 L272 256 L274 250 L275 246 L276 241 L277 236 L278 232 L280 226 L281 222 L282 216 L283 212 L284 208 L286 202 L287 198 L288 192 L289 188 L290 184 L292 178 L293 174 L294 168 M0 599 L5 598 L10 597 L16 597 L22 596 L26 596 L32 595 L38 594 L42 594 L48 593 L54 593 L59 592 L64 591 L70 591 L76 590 L80 590 L86 589 L92 588 L96 588 L102 587 L108 586 L112 586 L118 585 L124 584 L128 584 L134 583 L139 582 L144 581 L149 580 L154 579 L158 578 L163 576 L168 574 L172 572 L176 570 L179 568 L182 566 L186 563 L189 560 L192 556 L194 553 L196 549 L198 545 L200 540 L201 536 L202 532 L204 526 L205 522 L206 516 L207 512 L208 506 L209 502 L210 496 L211 492 L212 486 L213 482 L214 476 L215 472 L216 467 L217 462 L218 458 L220 452 L221 448 L222 444 L224 439 L226 434 L227 430 L228 426 L230 422 L232 416 L234 412 L235 408 L237 404 L238 400 L240 396 L242 391 L244 386 L245 382 L247 378 L249 374 L250 370 L252 365 L254 360 L255 356 L257 352 L258 348 L260 343 L262 338 L263 334 L264 330 L266 324 L267 320 L268 316 L270 311 L271 306 L272 302 L274 296 L275 292 L276 288 L278 282 L279 278 L280 273 L281 268 L282 264 L284 258 L285 254 L286 249 L287 244 L288 240 L290 234 L291 230 L292 224 L293 220 M0 602 L5 602 L10 602 L16 601 L22 600 L26 600 L32 599 L38 599 L44 598 L48 598 L54 597 L60 597 L66 596 L70 596 L76 595 L82 595 L88 594 L93 594 L98 594 L104 593 L110 593 L116 592 L120 592 L126 591 L132 591 L138 590 L142 590 L148 589 L154 588 L158 588 L164 587 L168 586 L174 584 L178 583 L182 581 L186 579 L190 577 L194 574 L197 572 L200 568 L202 566 L204 562 L206 558 L208 554 L210 548 L211 544 L212 539 L213 534 L214 528 L215 524 L215 518 L216 513 L217 508 L218 502 L218 498 L219 492 L220 488 L221 482 L222 478 L223 472 L224 468 L226 462 L227 458 L228 454 L230 448 L231 444 L232 440 L234 435 L236 430 L237 426 L239 422 L240 418 L242 414 L244 409 L246 404 L248 400 L250 396 L251 392 L253 388 L255 384 L256 380 L258 376 L260 371 L262 367 L264 362 L265 358 L267 354 L269 350 L270 346 L272 341 L274 336 L275 332 L276 328 L278 323 L279 318 L281 314 L282 309 L284 304 L285 300 L286 295 L287 290 L288 286 L290 280 L291 276 L292 272 L294 266 M0 606 L4 606 L10 606 L16 605 L22 605 L28 604 L32 604 L38 603 L44 603 L50 602 L55 602 L60 602 L66 601 L72 601 L78 600 L84 600 L88 600 L94 600 L100 599 L106 599 L112 599 L118 599 L124 598 L130 598 L136 598 L140 598 L146 598 L152 597 L158 597 L164 596 L169 596 L174 595 L180 594 L184 594 L190 592 L194 591 L198 589 L202 587 L206 584 L209 582 L212 579 L214 576 L216 572 L218 568 L220 562 L221 558 L222 552 L222 548 L223 542 L223 536 L224 530 L224 526 L225 520 L225 514 L226 508 L226 504 L227 498 L228 492 L228 488 L229 482 L230 478 L231 472 L232 468 L234 462 L235 458 L236 454 L238 448 L239 444 L241 440 L242 436 L244 431 L246 426 L248 422 L249 418 L251 414 L253 410 L255 406 L256 402 L258 398 L260 394 L262 390 L264 386 L266 382 L268 377 L270 373 L272 368 L274 364 L276 360 L277 356 L279 352 L281 348 L282 344 L284 339 L286 334 L287 330 L289 326 L290 321 L292 316 L293 312 M0 610 L4 610 L10 610 L16 609 L22 609 L28 608 L33 608 L38 608 L44 607 L50 607 L56 607 L62 606 L68 606 L72 606 L78 606 L84 605 L90 605 L96 605 L102 605 L108 605 L114 605 L120 605 L126 605 L132 605 L138 605 L144 606 L150 606 L156 606 L162 606 L168 606 L174 606 L180 606 L186 605 L192 605 L198 604 L202 603 L207 602 L212 600 L216 599 L220 596 L223 594 L226 591 L228 588 L230 584 L232 580 L233 574 L234 568 L234 564 L234 558 L234 552 L234 548 L234 542 L234 536 L234 530 L234 524 L234 518 L234 512 L234 508 L235 502 L235 496 L236 490 L237 486 L238 480 L238 476 L240 470 L241 466 L242 461 L244 456 L245 452 L246 448 L248 443 L250 438 L251 434 L253 430 L255 426 L257 422 L258 418 L260 414 L262 410 L264 406 L266 402 L268 398 L270 394 L272 390 L274 386 L276 382 L278 378 L280 374 L282 370 L284 366 L286 362 L288 358 L290 353 L292 348 L294 344 M0 614 L4 614 L10 614 L16 613 L22 613 L28 613 L34 612 L39 612 L44 612 L50 611 L56 611 L62 611 L68 611 L74 611 L80 611 L86 611 L92 611 L98 611 L104 611 L110 611 L116 611 L122 612 L128 612 L132 612 L138 613 L144 613 L150 614 L155 614 L160 614 L166 615 L172 615 L178 616 L182 616 L188 617 L194 617 L200 617 L206 617 L212 617 L218 617 L223 616 L228 615 L233 614 L238 612 L242 610 L245 608 L248 604 L250 600 L251 596 L252 590 L251 584 L250 578 L250 574 L249 568 L248 564 L247 558 L246 553 L245 548 L244 542 L244 538 L243 532 L243 526 L242 520 L242 514 L242 508 L243 502 L243 496 L244 490 L245 486 L246 480 L246 476 L248 470 L249 466 L250 461 L252 456 L253 452 L254 448 L256 444 L258 439 L260 434 L262 430 L264 426 L266 422 L268 418 L270 414 L272 410 L274 406 L276 403 L278 399 L280 395 L282 392 L284 388 L286 384 L288 380 L291 376 L293 372 M294 616 L292 614 L289 610 L286 606 L284 603 L282 600 L279 596 L277 592 L274 588 L272 585 L270 581 L268 577 L266 573 L264 569 L262 564 L260 560 L259 556 L257 552 L256 547 L255 542 L254 538 L253 532 L252 527 L251 522 L251 516 L251 510 L251 504 L251 498 L252 492 L252 488 L253 482 L254 477 L255 472 L256 468 L258 462 L259 458 L261 454 L262 450 L264 445 L266 441 L268 436 L270 432 L272 428 L274 425 L276 421 L278 417 L280 414 L282 410 L285 406 L287 402 L289 398 L292 394 L294 390 M0 618 L4 618 L10 618 L16 617 L22 617 L28 617 L34 617 L40 616 L46 616 L52 616 L56 616 L62 616 L68 616 L74 616 L80 616 L86 616 L90 616 L96 616 L102 617 L108 617 L114 617 L120 618 L124 618 L130 619 L136 620 L140 620 L146 621 L152 622 L156 622 L162 623 L167 624 L172 625 L178 626 L182 627 L188 628 L192 628 L198 629 L203 630 L208 631 L214 632 L218 632 L224 633 L230 634 L234 634 L240 634 L246 635 L252 635 L258 635 L264 635 L270 635 L276 634 L280 634 L286 633 L291 632 M294 583 L290 580 L288 578 L284 574 L282 571 L279 568 L276 564 L274 560 L272 557 L270 553 L268 549 L266 544 L265 540 L263 536 L262 530 L261 526 L260 520 L260 516 L259 510 L259 504 L259 498 L260 492 L260 488 L261 482 L262 478 L263 472 L264 468 L266 463 L268 458 L269 454 L271 450 L273 446 L275 442 L277 438 L279 434 L281 430 L283 426 L286 422 L288 418 L290 415 L292 412 M0 622 L4 622 L10 622 L16 621 L22 621 L28 621 L34 621 L40 621 L46 621 L52 621 L58 621 L64 621 L70 621 L76 621 L82 621 L88 621 L94 622 L98 622 L104 623 L110 623 L116 624 L120 624 L126 625 L132 626 L136 627 L142 628 L146 628 L152 630 L156 630 L162 632 L166 633 L171 634 L176 635 L180 636 L186 638 L190 639 L195 640 L200 641 L204 643 L209 644 L214 645 L218 646 L224 648 L228 649 L232 650 L238 652 L242 653 L248 654 L252 655 L256 656 L262 658 L266 659 L272 660 L276 661 L280 662 L285 664 L290 666 L294 667 M294 565 L291 562 L288 559 L286 556 L283 552 L280 548 L278 544 L276 540 L274 536 L273 532 L271 528 L270 523 L269 518 L268 512 L268 508 L268 502 L268 496 L268 492 L269 486 L270 480 L271 476 L272 472 L274 466 L275 462 L277 458 L278 454 L280 450 L282 446 L284 442 L287 438 L289 434 L291 430 L294 426 M0 626 L4 626 L10 626 L16 626 L22 626 L28 625 L34 625 L40 625 L46 625 L52 625 L58 625 L64 626 L70 626 L75 626 L80 626 L86 627 L92 627 L98 628 L102 628 L108 629 L114 630 L118 630 L124 631 L128 632 L134 633 L138 634 L144 636 L148 637 L153 638 L158 639 L162 640 L167 642 L172 643 L176 645 L180 646 L186 648 L190 650 L194 651 L198 652 L202 654 L208 656 L212 658 L216 659 L220 660 L224 662 L230 664 L234 666 L238 667 L242 668 L246 670 L252 672 L256 673 L260 675 L264 676 L269 678 L274 680 L278 681 L282 683 L286 684 L291 686 M294 548 L291 544 L288 540 L286 536 L284 532 L282 528 L281 524 L280 520 L278 514 L278 510 L277 504 L277 498 L277 492 L278 486 L279 482 L280 476 L281 472 L282 468 L284 464 L286 459 L288 455 L290 451 L292 447 L294 444 M0 630 L6 630 L10 630 L16 630 L22 630 L28 630 L34 630 L40 630 L46 630 L50 630 L56 630 L62 630 L68 631 L74 631 L80 632 L85 632 L90 633 L96 633 L101 634 L106 635 L112 636 L116 637 L122 638 L126 639 L132 640 L136 641 L140 642 L146 644 L150 645 L154 646 L159 648 L164 650 L168 651 L172 653 L176 655 L180 656 L184 658 L189 660 L194 662 L198 664 L202 666 L206 667 L210 669 L214 671 L218 673 L222 675 L226 676 L230 678 L234 680 L239 682 L243 684 L248 686 L252 688 L256 689 L260 691 L264 692 L268 694 L273 696 L278 698 L282 700 L286 701 L290 703 L294 705 M294 527 L292 523 L290 518 L289 514 L288 510 L287 504 L287 498 L287 492 L288 486 L289 482 L290 476 L291 472 L293 468 M0 634 L6 634 L12 634 L18 634 L24 634 L30 634 L36 634 L42 635 L48 635 L54 635 L60 635 L66 636 L70 636 L76 637 L82 637 L88 638 L92 639 L98 639 L102 640 L108 641 L112 642 L118 644 L122 645 L127 646 L132 647 L136 649 L140 650 L146 652 L150 653 L154 655 L158 657 L162 658 L166 660 L171 662 L175 664 L179 666 L183 668 L187 670 L191 672 L195 674 L199 676 L203 678 L206 680 L210 682 L214 684 L218 686 L222 688 L226 690 L230 692 L234 694 L238 696 L242 698 L246 700 L251 702 L255 704 L260 706 L264 708 L268 710 L272 711 L276 713 L280 715 L284 717 L288 719 L292 720 M0 638 L6 639 L12 639 L18 639 L24 639 L30 639 L36 639 L42 639 L48 640 L54 640 L58 640 L64 641 L70 641 L76 642 L80 643 L86 643 L90 644 L96 645 L100 646 L106 647 L110 648 L116 650 L120 651 L124 652 L129 654 L134 656 L138 657 L142 659 L146 660 L150 662 L154 664 L159 666 L163 668 L167 670 L171 672 L174 674 L178 676 L182 678 L186 681 L190 683 L194 685 L198 688 L202 690 L206 692 L209 694 L212 696 L216 698 L220 700 L224 703 L228 705 L232 707 L236 709 L240 711 L244 713 L248 715 L252 717 L256 719 L260 721 L264 723 L268 725 L272 727 L276 729 L280 730 L284 732 L288 734 L292 736 M0 643 L6 643 L12 643 L18 643 L24 643 L30 644 L36 644 L40 644 L46 645 L52 645 L58 646 L63 646 L68 647 L74 647 L78 648 L84 649 L89 650 L94 651 L98 652 L104 653 L108 655 L113 656 L118 658 L122 659 L126 660 L130 662 L135 664 L140 666 L144 668 L148 670 L152 672 L156 674 L159 676 L163 678 L167 680 L170 682 L174 684 L178 687 L182 689 L186 692 L189 694 L192 696 L196 699 L200 701 L204 704 L207 706 L211 708 L214 710 L218 713 L222 715 L226 718 L230 720 L234 722 L237 724 L241 726 L244 728 L248 730 L252 732 L256 734 L260 736 L264 738 L268 740 L272 742 L277 744 L281 746 L285 748 L289 750 L293 752 M0 647 L6 648 L12 648 L17 648 L22 648 L28 649 L34 649 L40 649 L46 650 L50 650 L56 651 L62 651 L66 652 L72 653 L78 654 L82 655 L88 656 L92 657 L96 658 L102 660 L106 661 L110 662 L115 664 L120 666 L124 668 L128 669 L132 671 L136 673 L140 675 L144 677 L148 679 L152 682 L156 684 L159 686 L163 688 L166 690 L170 693 L174 696 L177 698 L180 700 L184 703 L188 705 L192 708 L194 710 L198 713 L202 715 L206 718 L209 720 L212 722 L216 725 L220 728 L224 730 L227 732 L230 734 L234 736 L238 739 L242 741 L246 743 L250 746 L254 748 L258 750 L262 752 L266 754 L270 756 L274 758 L278 760 L282 762 L286 764 L290 766 L294 768 M0 652 L6 652 L12 653 L18 653 L24 653 L30 654 L34 654 L40 655 L46 655 L52 656 L56 656 L62 657 L67 658 L72 659 L77 660 L82 661 L86 662 L92 664 L96 665 L100 666 L105 668 L110 670 L114 671 L118 673 L122 675 L126 677 L130 679 L134 681 L138 683 L142 685 L146 688 L150 690 L153 692 L156 694 L160 697 L164 700 L167 702 L170 704 L174 707 L178 710 L180 712 L184 715 L188 718 L191 720 L194 723 L198 726 L201 728 L204 730 L208 733 L212 736 L215 738 L218 740 L222 743 L226 746 L230 748 L233 750 L236 752 L240 754 L244 757 L248 759 L252 761 L256 763 L260 766 L264 768 L268 770 L272 772 L276 774 L280 776 L284 778 L288 780 L292 782 M0 657 L6 657 L12 658 L16 658 L22 658 L28 659 L34 659 L39 660 L44 661 L50 661 L54 662 L60 663 L66 664 L70 665 L75 666 L80 667 L84 668 L90 670 L94 671 L98 673 L102 674 L106 676 L111 678 L115 680 L119 682 L123 684 L127 686 L130 688 L134 690 L138 693 L142 695 L146 698 L149 700 L152 702 L156 705 L160 708 L162 710 L166 713 L170 716 L172 718 L176 721 L180 724 L182 726 L186 729 L189 732 L192 734 L196 737 L199 740 L202 742 L206 745 L210 748 L212 750 L216 753 L220 756 L223 758 L226 760 L230 763 L234 765 L238 768 L242 770 L245 772 L248 774 L252 776 L256 778 L260 780 L264 782 L268 785 L272 787 L276 789 L280 791 L284 793 L288 795 L292 797 M0 662 L6 663 L12 663 L18 664 L23 664 L28 665 L34 665 L40 666 L44 666 L50 667 L54 668 L60 669 L64 670 L70 671 L74 673 L79 674 L84 675 L88 677 L92 678 L97 680 L101 682 L106 684 L110 686 L114 688 L118 690 L121 692 L124 694 L128 696 L132 699 L136 701 L140 704 L142 706 L146 709 L150 712 L153 714 L156 717 L160 720 L162 722 L166 725 L169 728 L172 730 L176 734 L179 736 L182 739 L185 742 L188 744 L192 748 L195 750 L198 753 L202 756 L204 758 L208 761 L212 764 L215 766 L218 769 L222 772 L225 774 L228 776 L232 778 L236 781 L240 784 L244 786 L247 788 L251 790 L254 792 L258 794 L262 796 L266 798 L270 800 L274 802 L278 804 L282 807 L286 809 L290 811 L294 813 M0 668 L5 668 L10 668 L16 669 L22 670 L26 670 L32 671 L38 672 L42 672 L48 673 L52 674 L58 675 L62 676 L68 678 L72 679 L76 680 L81 682 L86 684 L90 685 L94 687 L98 689 L102 691 L106 693 L110 695 L114 697 L118 700 L122 702 L125 704 L128 706 L132 709 L136 712 L138 714 L142 717 L146 720 L148 722 L152 725 L155 728 L158 731 L162 734 L164 736 L168 740 L171 742 L174 745 L177 748 L180 751 L184 754 L186 756 L190 760 L193 762 L196 765 L199 768 L202 770 L206 774 L209 776 L212 778 L216 782 L219 784 L222 786 L226 789 L230 792 L233 794 L236 796 L240 798 L244 801 L248 803 L252 806 L256 808 L260 810 L264 812 L267 814 L271 816 L275 818 L279 820 L283 822 L287 824 L291 826 M0 673 L6 674 L10 674 L16 675 L22 676 L26 676 L32 677 L37 678 L42 679 L47 680 L52 681 L56 682 L62 684 L66 685 L70 686 L76 688 L80 690 L84 691 L88 693 L92 695 L96 697 L100 699 L104 701 L108 703 L112 706 L115 708 L118 710 L122 713 L126 716 L129 718 L132 720 L136 723 L139 726 L142 729 L146 732 L148 734 L152 738 L155 740 L158 743 L161 746 L164 749 L167 752 L170 755 L173 758 L176 760 L180 764 L182 766 L186 770 L188 772 L192 776 L195 778 L198 781 L201 784 L204 786 L208 790 L211 792 L214 794 L218 798 L221 800 L224 802 L228 805 L232 808 L235 810 L238 812 L242 814 L246 817 L250 819 L254 822 L258 824 L262 826 L266 828 L270 830 L273 832 L277 834 L281 836 L285 838 L289 840 L293 842 M0 679 L6 680 L10 681 L16 681 L20 682 L26 683 L32 684 L36 685 L42 686 L46 687 L51 688 L56 689 L60 691 L64 692 L70 694 L74 695 L78 697 L82 699 L86 701 L90 703 L94 705 L98 707 L102 709 L106 712 L109 714 L112 716 L116 719 L120 722 L123 724 L126 727 L130 730 L132 732 L136 735 L139 738 L142 741 L145 744 L148 747 L152 750 L154 752 L158 756 L160 758 L164 762 L166 764 L170 768 L172 770 L176 774 L178 776 L182 780 L184 782 L188 786 L190 788 L194 792 L196 794 L200 797 L203 800 L206 802 L210 806 L213 808 L216 811 L220 814 L223 816 L226 818 L230 821 L234 824 L237 826 L240 828 L244 830 L248 833 L252 835 L256 838 L260 840 L264 842 L268 844 L272 846 L275 848 L279 850 L283 852 L287 854 L291 856 M0 686 L4 686 L10 687 L15 688 L20 689 L26 690 L30 691 L36 692 L40 693 L44 694 L50 696 L54 697 L58 698 L63 700 L68 702 L72 703 L76 705 L80 707 L84 709 L88 711 L92 713 L96 716 L99 718 L102 720 L106 723 L110 726 L113 728 L116 730 L120 733 L123 736 L126 739 L130 742 L132 744 L136 748 L138 750 L142 754 L144 756 L148 760 L150 762 L154 766 L156 768 L160 772 L162 774 L166 778 L168 780 L172 784 L174 787 L177 790 L180 793 L183 796 L186 799 L190 802 L192 804 L196 808 L198 810 L202 814 L205 816 L208 819 L212 822 L214 824 L218 827 L222 830 L224 832 L228 835 L232 837 L236 840 L239 842 L242 844 L246 847 L250 849 L254 851 L258 854 L262 856 L266 858 L270 860 L274 862 L277 864 L281 866 L285 868 L289 870 L293 872 M0 693 L6 694 L10 694 L16 695 L20 696 L26 698 L30 698 L36 700 L40 701 L44 702 L50 704 L54 705 L58 707 L62 708 L66 710 L71 712 L75 714 L79 716 L82 718 L86 720 L90 723 L94 725 L98 728 L101 730 L104 732 L108 735 L111 738 L114 740 L118 744 L120 746 L124 749 L127 752 L130 755 L133 758 L136 761 L139 764 L142 767 L145 770 L148 773 L151 776 L154 780 L156 782 L160 786 L162 788 L166 792 L168 795 L171 798 L174 801 L177 804 L180 807 L183 810 L186 813 L189 816 L192 819 L195 822 L198 825 L202 828 L204 830 L208 834 L211 836 L214 839 L218 842 L221 844 L224 847 L228 849 L232 852 L234 854 L238 856 L242 859 L246 862 L250 864 L254 866 L257 868 L261 870 L264 872 M0 700 L4 701 L10 702 L14 703 L19 704 L24 705 L28 706 L34 708 L38 709 L42 710 L47 712 L52 714 L56 715 L60 717 L64 719 L68 721 L72 723 L76 725 L80 727 L84 730 L88 732 L91 734 L94 736 L98 739 L101 742 L104 744 L108 747 L111 750 L114 753 L118 756 L120 758 L124 762 L126 764 L130 768 L132 770 L136 774 L138 776 L141 780 L144 783 L147 786 L150 789 L152 792 L156 796 L158 798 L162 802 L164 805 L167 808 L170 811 L173 814 L176 817 L178 820 L182 824 L184 826 L188 830 L190 832 L194 836 L196 838 L200 841 L203 844 L206 847 L210 850 L212 852 L216 855 L220 858 L222 860 L226 863 L230 866 L233 868 L236 870 L240 873 M0 708 L4 709 L9 710 L14 711 L18 712 L24 714 L28 715 L32 716 L38 718 L42 719 L46 721 L50 723 L54 724 L58 726 L62 728 L66 730 L70 732 L74 735 L78 737 L82 740 L86 742 L88 744 L92 747 L96 750 L99 752 L102 755 L106 758 L108 760 L112 764 L114 766 L118 770 L120 772 L124 776 L126 778 L130 782 L132 784 L136 788 L138 790 L141 794 L144 797 L147 800 L150 804 L152 806 L156 810 L158 813 L161 816 L164 819 L167 822 L170 826 L172 828 L176 832 L178 834 L182 838 L184 840 L187 844 L190 847 L194 850 L196 852 L200 856 L202 858 L206 862 L209 864 L212 867 L216 870 L218 872 M0 716 L6 718 L10 719 L14 720 L20 722 L24 723 L28 724 L33 726 L38 728 L42 730 L46 731 L50 733 L54 735 L58 737 L62 739 L66 741 L70 743 L74 746 L77 748 L80 750 L84 753 L88 756 L91 758 L94 761 L98 764 L100 766 L104 769 L107 772 L110 775 L113 778 L116 781 L119 784 L122 787 L125 790 L128 794 L130 796 L134 800 L136 802 L139 806 L142 809 L145 812 L148 816 L150 818 L153 822 L156 825 L159 828 L162 832 L164 834 L168 838 L170 840 L173 844 L176 847 L179 850 L182 853 L185 856 L188 859 L191 862 L194 865 L197 868 L200 871 L203 874 M0 726 L4 727 L8 728 L14 730 L18 731 L22 733 L26 734 L32 736 L36 738 L40 739 L44 741 L48 743 L52 745 L56 747 L60 749 L64 752 L68 754 L71 756 L74 758 L78 761 L82 764 L85 766 L88 769 L92 772 L94 774 L98 777 L101 780 L104 783 L107 786 L110 789 L113 792 L116 795 L119 798 L122 801 L125 804 L128 808 L130 810 L134 814 L136 817 L139 820 L142 824 L144 826 L148 830 L150 833 L153 836 L156 839 L158 842 L162 846 L164 849 L167 852 L170 855 L173 858 L176 862 L178 864 L182 868 L184 870 L188 874 M0 736 L4 737 L8 738 L13 740 L18 742 L22 743 L26 745 L30 746 L34 748 L38 750 L43 752 L47 754 L51 756 L54 758 L58 760 L62 763 L66 765 L70 768 L73 770 L76 772 L80 775 L83 778 L86 780 L90 784 L93 786 L96 789 L99 792 L102 795 L105 798 L108 801 L111 804 L114 807 L117 810 L120 813 L122 816 L126 820 L128 822 L131 826 L134 829 L137 832 L140 836 L142 838 L145 842 L148 845 L151 848 L154 852 L156 854 L159 858 L162 861 L165 864 L168 868 L170 870 L174 874 M0 746 L4 748 L10 750 L14 752 L18 753 L22 755 L26 756 L30 758 L34 760 L38 762 L42 764 L46 766 L50 768 L54 770 L58 773 L62 776 L66 778 L68 780 L72 783 L76 786 L79 788 L82 790 L86 794 L88 796 L92 799 L95 802 L98 805 L101 808 L104 811 L107 814 L110 817 L113 820 L116 823 L118 826 L122 830 L124 832 L127 836 L130 839 L133 842 L136 846 L138 848 L141 852 L144 855 L146 858 L150 862 L152 864 L155 868 L158 871 L160 874 M0 758 L4 759 L8 761 L12 763 L16 764 L20 766 L25 768 L29 770 L33 772 L37 774 L41 776 L45 778 L48 780 L52 782 L56 785 L60 787 L64 790 L66 792 L70 795 L74 798 L77 800 L80 803 L84 806 L86 808 L90 812 L93 814 L96 817 L99 820 L102 823 L105 826 L108 829 L110 832 L114 836 L116 838 L120 842 L122 845 L125 848 L128 851 L130 854 L134 858 L136 861 L139 864 L142 868 L144 870 L147 874 M0 770 L5 772 L10 774 L14 776 L18 778 L22 779 L26 781 L30 783 L34 785 L38 788 L42 790 L46 792 L49 794 L52 796 L56 798 L60 801 L64 804 L67 806 L70 809 L74 812 L77 814 L80 817 L84 820 L86 822 L90 826 L92 828 L96 832 L98 834 L102 838 L104 840 L108 844 L110 846 L114 850 L116 853 L119 856 L122 859 L124 862 L128 866 L130 869 L133 872 M0 783 L4 784 L8 786 L12 788 L16 790 L21 792 L25 794 L29 796 L32 798 L36 800 L40 802 L44 805 L48 807 L52 810 L55 812 L58 814 L62 817 L66 820 L69 822 L72 824 L76 828 L79 830 L82 833 L85 836 L88 838 L92 842 L94 844 L98 848 L100 850 L104 854 L106 857 L109 860 L112 863 L115 866 L118 870 L120 872 M0 796 L4 798 L8 800 L12 802 L16 803 L20 805 L24 807 L28 809 L32 812 L36 814 L40 816 L43 818 L46 820 L50 822 L54 825 L58 828 L61 830 L64 832 L68 836 L71 838 L74 840 L78 844 L80 846 L84 849 L87 852 L90 855 L93 858 L96 861 L99 864 L102 867 L105 870 L108 873 M0 810 L4 812 L8 813 L12 815 L16 817 L20 819 L24 821 L28 824 L32 826 L36 828 L39 830 L42 832 L46 834 L50 837 L54 840 L57 842 L60 844 L64 847 L68 850 L70 852 L74 855 L77 858 L80 860 L84 864 L86 866 L90 870 L92 872 M0 824 L4 826 L8 828 L12 830 L16 832 L20 834 L24 836 L28 838 L32 840 L35 842 L38 844 L42 846 L46 849 L50 851 L54 854 L57 856 L60 859 L64 862 L67 864 L70 866 L74 870 L76 872 M0 838 L4 840 L8 842 L12 844 L16 846 L20 848 L24 850 L27 852 L31 854 L34 856 L38 858 L42 861 L46 863 L50 866 L53 868 L56 870 L60 873 M0 852 L4 854 L8 856 L12 859 L16 861 L20 863 L24 865 L28 867 L32 869 L36 872 L40 874 M0 867 L4 869 L8 871 L12 873" stroke="rgba(255,255,255,0.045)" stroke-width="1" mask="url(#tm)"/>
    <path d="M71.0 175.8 h15.6 M78.8 169.3 v13 M177.8 175.8 h15.6 M185.6 169.3 v13 M282.4 175.8 h15.6 M290.2 169.3 v13 M71.0 277.6 h15.6 M78.8 271.1 v13 M177.8 277.6 h15.6 M185.6 271.1 v13 M282.4 277.6 h15.6 M290.2 271.1 v13 M71.0 379.2 h15.6 M78.8 372.7 v13 M177.8 379.2 h15.6 M185.6 372.7 v13 M282.4 379.2 h15.6 M290.2 372.7 v13 M71.0 480.4 h15.6 M78.8 473.9 v13 M177.8 480.4 h15.6 M185.6 473.9 v13 M282.4 480.4 h15.6 M290.2 473.9 v13 M71.0 582.4 h15.6 M78.8 575.9 v13 M177.8 582.4 h15.6 M185.6 575.9 v13 M282.4 582.4 h15.6 M290.2 575.9 v13 M71.0 683.6 h15.6 M78.8 677.1 v13 M177.8 683.6 h15.6 M185.6 677.1 v13 M282.4 683.6 h15.6 M290.2 677.1 v13 M71.0 784.8 h15.6 M78.8 778.3 v13 M177.8 784.8 h15.6 M185.6 778.3 v13 M282.4 784.8 h15.6 M290.2 778.3 v13" stroke="rgba(255,255,255,0.05)" stroke-width="1.5"/>
  </svg>
  <!-- logo -->
  <svg class="abs" style="left:0;top:0;" width="293" height="120" viewBox="0 0 293 120" fill="none" stroke="#ffffff">
    <g stroke-width="2.9" stroke-linecap="butt" stroke-linejoin="miter">
      <path d="M23.4 23 V36.7 M31.7 23 V36.7 M23.4 30.2 H31.7"/>
      <path d="M36.7 36.7 L41.6 23 L44.8 23 L49.7 36.7 L46.5 36.7 L43.2 27.2 L39.9 36.7 Z" fill="#fff" stroke="none"/>
      <path d="M55.1 23 V36.7"/>
      <path d="M61.3 23 L64.6 23 L68.15 32.6 L71.7 23 L75 23 L69.8 36.7 L66.5 36.7 Z" fill="#fff" stroke="none"/>
      <path d="M80.3 23 V36.7"/>
      <path d="M92.2 25.4 C91 24.2 89.6 23.9 88.3 23.9 C86.3 23.9 85.3 25.2 85.3 26.6 C85.3 30.4 92.4 28.9 92.4 33.2 C92.4 35 90.9 36.1 88.5 36.1 C86.8 36.1 85.3 35.4 84.3 34.4" stroke-width="2.6"/>
      <path d="M99 23 V36.7"/>
      <circle cx="112.2" cy="29.85" r="5.6" stroke-width="2.6"/>
      <path d="M124.4 23 H127.1 V36.7 H124.4 Z M130.4 23 H133.1 V36.7 H130.4 Z M124.4 23 H127.5 L133.1 36.7 H130 Z" fill="#fff" stroke="none"/>
    </g>
    <g stroke-width="3.1" stroke-linecap="butt" stroke-linejoin="miter">
      <path d="M22 77.25 V46 H25.4 L37.05 63.4 L48.7 46 H52.1 V77.25 H48.9 V51.6 L38.7 68.3 H35.4 L25.2 51.6 V77.25 Z" fill="#fff" stroke="none"/>
      <path d="M58.6 57.6 C60.8 56.3 63.2 55.8 65.7 55.8 C70.6 55.8 73.6 58.6 73.6 63.6 V77.25"/>
      <path d="M73.6 66.4 C71.2 65.3 68.4 64.9 65.8 64.9 C61.2 64.9 58.5 67.1 58.5 70.4 C58.5 73.8 61.3 75.8 65 75.8 C69 75.8 72.4 73.6 73.6 70.6"/>
      <path d="M84.25 44.9 V77.25"/>
      <path d="M85.5 68.3 L100.6 55"/>
      <path d="M90.6 63.6 L101.8 77.25"/>
      <path d="M107.75 54.3 V77.25"/>
      <circle cx="107.75" cy="47.8" r="1.8" fill="#fff" stroke="none"/>
      <path d="M116.5 47.2 V70.8 C116.5 74.3 118.4 75.75 121.4 75.75 C123.5 75.75 125.4 75.3 126.9 74.5"/>
      <path d="M113.3 56.5 H127"/>
      <circle cx="141.6" cy="65.85" r="10.2"/>
      <path d="M166.4 77.25 V47.55 H186.8 M166.4 61.5 H184.9"/>
      <path d="M192.4 46 L218.6 77.25 M218.4 46 L192.2 77.25"/>
    </g>
  </svg>
  <div class="t" style="left:21px;top:89.8px;color:#4ec5cf;font-size:19px;letter-spacing:1px;-webkit-text-stroke:0.35px #4ec5cf;">ENCODER</div>
  <!-- nav -->
  <div class="t nav" style="left:70px;top:218.7px;">Dashboard</div>
  <div class="t nav" style="left:70px;top:290.4px;">Streaming</div>
  <div class="t nav" style="left:70px;top:362.5px;">Settings</div>
  <div class="t nav" style="left:70px;top:435.6px;color:#fff;font-weight:bold;letter-spacing:0.6px;-webkit-text-stroke:0;">Security</div>
  <div class="t nav" style="left:70px;top:506.8px;letter-spacing:1.35px;">Help Center</div>
  <div class="t nav" style="left:65px;top:835px;letter-spacing:1.5px;">admin</div>
</div>
<!-- header -->
<div class="t" style="left:367px;top:25.5px;color:#fff;font-size:25px;font-weight:bold;">Security</div>
<div class="t" style="left:1227px;top:27px;color:#fff;font-size:24px;letter-spacing:0.4px;-webkit-text-stroke:0.2px #fff;">haistartup</div>
<!-- tabs -->
<div class="t tab" style="left:313px;">Accounts</div>
<div class="t tab" style="left:440px;">Messages</div>
<div class="t tab" style="left:568px;">Banner</div>
<div class="t tab" style="left:676px;">Policies</div>
<div class="t tab" style="left:788px;color:#fff;-webkit-text-stroke:0.35px #fff;">Certificates</div>
<div class="t tab" style="left:931px;">Audit</div>
<div class="abs" style="left:312px;top:132px;width:1056px;height:1px;background:#55566a;"></div>
<div class="abs" style="left:787px;top:129px;width:95px;height:3px;background:#fff;"></div>

<div class="t" style="left:313px;top:193px;color:#fff;font-size:25px;font-weight:bold;letter-spacing:0.2px;">Certificates</div>

<div class="t sec" style="left:313px;top:275.3px;">IDENTITY CERTIFICATES</div>
<div class="btn" style="left:1080px;top:266px;width:120px;">GENERATE</div>
<div class="btn" style="left:1224px;top:266px;width:120px;">IMPORT</div>

<!-- identity table -->
<div class="abs" style="left:312px;top:315px;width:1056px;height:60px;background:#2a2b31;"></div>
<div class="abs" style="left:312px;top:375px;width:1056px;height:196px;background:#33343d;"></div>
<div class="abs" style="left:312px;top:440px;width:1056px;height:1px;background:#44454e;"></div>
<div class="abs" style="left:312px;top:506px;width:1056px;height:1px;background:#44454e;"></div>
<div class="cb" style="left:336px;top:337px;"></div>
<div class="t hdr" style="left:389px;top:338.5px;">NAME</div>
<div class="t hdr" style="left:835px;top:338.5px;">TYPE</div>
<div class="t hdr" style="left:1211px;top:338.5px;">DEFAULT</div>

<div class="cb" style="left:336px;top:398px;"></div>
<div class="t cell" style="left:389px;top:399px;">autocert</div>
<div class="t cell" style="left:835px;top:399px;">Self-Signed</div>
<div class="radio" style="left:1229px;top:397px;"></div>

<div class="cb" style="left:336px;top:464px;"></div>
<div class="t cell" style="left:389px;top:464.5px;">dev june 2022</div>
<div class="t cell" style="left:835px;top:464.5px;">CA-Signed</div>
<div class="radio" style="left:1229px;top:463px;"></div>

<div class="cb" style="left:336px;top:529px;"></div>
<div class="t cell" style="left:389px;top:529.5px;">dev june 2023</div>
<div class="t cell" style="left:835px;top:529.5px;">CA-Signed</div>
<div class="abs" style="left:1229px;top:529px;width:20px;height:20px;border-radius:50%;background:#3a74f4;"></div>
<div class="abs" style="left:1235px;top:535px;width:8px;height:8px;border-radius:50%;background:#fff;"></div>

<div class="t sec" style="left:313px;top:641.6px;">CA CERTIFICATES</div>
<div class="btn" style="left:1224px;top:633px;width:120px;">IMPORT</div>
<div class="abs" style="left:312px;top:682px;width:1056px;height:62px;background:#2a2b31;border-bottom:1px solid #3b3c44;"></div>
<div class="cb" style="left:336px;top:703px;"></div>
<div class="t hdr" style="left:389px;top:704.5px;">NAME</div>
<div class="t hdr" style="left:819px;top:704.5px;">TYPE</div>

<svg class="abs" style="left:0;top:0;" width="1382" height="876" viewBox="0 0 1382 876" fill="none" stroke-linecap="round" stroke-linejoin="round">
  <!-- header shield -->
  <g stroke="#4cc3cc" stroke-width="3">
    <path d="M331.35 21 C329 24.6 324.5 27.3 318 27.8 L318 35.5 C318 46 324 52 331.35 55.5 C338.7 52 345.5 46 345.5 35.5 L345.5 27.8 C338.5 27.3 333.7 24.6 331.35 21 Z" stroke-linejoin="miter"/>
    <path d="M327 40 L329.9 44.2 L337.8 35"/>
  </g>
  <!-- sidebar shield -->
  <g stroke="#4fd2da" stroke-width="2">
    <path d="M36 432 C34.5 434.3 31.6 436 27 436.4 L27 441.3 C27 448 31.2 451.8 36 454 C40.8 451.8 45 448 45 441.3 L45 436.4 C40.4 436 37.5 434.3 36 432 Z" stroke-linejoin="miter"/>
    <path d="M32.7 443.7 L34.6 446.3 L39.8 440.5"/>
  </g>
  <g stroke="#9899a5" stroke-width="1.8">
    <!-- dashboard -->
    <rect x="26.1" y="216.1" width="7.8" height="10.3" rx="1"/>
    <rect x="26.1" y="231.2" width="7.8" height="6.5" rx="1"/>
    <rect x="38" y="216.1" width="8" height="6.6" rx="1"/>
    <rect x="38" y="227.3" width="8" height="10.4" rx="1"/>
    <!-- streaming -->
    <g stroke-linecap="butt" stroke-linejoin="miter">
    <path d="M38 289.8 H44 Q45.6 289.8 45.6 291.4 V306.5 Q45.6 308.1 44 308.1 H38"/>
    <path d="M27.1 292 H35 M31.2 288.3 L35 292 L31.2 295.7"/>
    <path d="M25 298.8 H41.8 M38 295.1 L41.8 298.8 L38 302.5"/>
    <path d="M27.1 305.9 H35 M31.2 302.2 L35 305.9 L31.2 309.6"/>
    </g>
    <!-- gear -->
    <path d="M47.40 370.90 L47.34 370.30 L47.16 369.72 L46.85 369.17 L46.41 368.67 L45.56 368.31 L44.71 368.04 L44.22 367.71 L43.83 367.37 L43.51 367.02 L43.26 366.65 L43.07 366.25 L42.92 365.80 L42.82 365.29 L42.78 364.70 L42.97 363.83 L43.09 362.92 L42.88 362.28 L42.55 361.74 L42.14 361.29 L41.65 360.94 L41.10 360.69 L40.50 360.56 L39.87 360.55 L39.22 360.68 L38.49 361.24 L37.82 361.84 L37.29 362.10 L36.81 362.27 L36.35 362.37 L35.90 362.40 L35.45 362.37 L34.99 362.27 L34.51 362.10 L33.98 361.84 L33.31 361.24 L32.58 360.68 L31.93 360.55 L31.30 360.56 L30.70 360.69 L30.15 360.94 L29.66 361.29 L29.25 361.74 L28.92 362.28 L28.71 362.92 L28.83 363.83 L29.02 364.70 L28.98 365.29 L28.88 365.80 L28.73 366.25 L28.54 366.65 L28.29 367.02 L27.97 367.37 L27.58 367.71 L27.09 368.04 L26.24 368.31 L25.39 368.67 L24.95 369.17 L24.64 369.72 L24.46 370.30 L24.40 370.90 L24.46 371.50 L24.64 372.08 L24.95 372.63 L25.39 373.13 L26.24 373.49 L27.09 373.76 L27.58 374.09 L27.97 374.43 L28.29 374.78 L28.54 375.15 L28.73 375.55 L28.88 376.00 L28.98 376.51 L29.02 377.10 L28.83 377.97 L28.71 378.88 L28.92 379.52 L29.25 380.06 L29.66 380.51 L30.15 380.86 L30.70 381.11 L31.30 381.24 L31.93 381.25 L32.58 381.12 L33.31 380.56 L33.98 379.96 L34.51 379.70 L34.99 379.53 L35.45 379.43 L35.90 379.40 L36.35 379.43 L36.81 379.53 L37.29 379.70 L37.82 379.96 L38.49 380.56 L39.22 381.12 L39.87 381.25 L40.50 381.24 L41.10 381.11 L41.65 380.86 L42.14 380.51 L42.55 380.06 L42.88 379.52 L43.09 378.88 L42.97 377.97 L42.78 377.10 L42.82 376.51 L42.92 376.00 L43.07 375.55 L43.26 375.15 L43.51 374.78 L43.83 374.43 L44.22 374.09 L44.71 373.76 L45.56 373.49 L46.41 373.13 L46.85 372.63 L47.16 372.08 L47.34 371.50Z"/>
    <circle cx="35.9" cy="370.9" r="4.1"/>
    <!-- headset -->
    <path d="M30 518 V511 A6.4 6.4 0 0 1 42.8 511 V516 C42.8 521 39.5 524.5 35 524.8"/>
    <path d="M30 511.1 H28 A3.25 3.25 0 0 0 28 517.6 H30"/>
    <path d="M42.8 511.1 H44 A3.25 3.25 0 0 1 44 517.6 H42.8"/>
    <path d="M32.5 517.6 Q36 521 39.5 517.6"/>
  </g>
  <!-- hamburger -->
  <g stroke="#a2a3ad" stroke-width="2.5">
    <path d="M25 168 H48 M25 175.4 H48 M25 182.6 H48"/>
  </g>
  <!-- avatar -->
  <g stroke="#9899a5">
    <circle cx="36.5" cy="846" r="13.5" stroke-width="2"/>
    <circle cx="36.3" cy="841.3" r="4.6" fill="#9899a5" stroke="none"/>
    <path d="M26.6 855.5 C28.5 850.5 32 848.2 36.5 848.2 C41 848.2 44.5 850.5 46.4 855.5 A13.5 13.5 0 0 1 26.6 855.5 Z" fill="#9899a5" stroke="none"/>
  </g>
  <!-- logout -->
  <g stroke="#9899a5" stroke-width="2">
    <path d="M253.9 834.5 Q253.9 832.8 255.5 833 L263.5 835 Q265 835.4 265 837 V854.6 Q265 856.2 263.5 856.6 L255.5 858.8 Q253.9 859.1 253.9 857.4 Z" fill="#9899a5" stroke="none"/>
    <path d="M251.5 846 H237 M242.5 840.5 L237 846 L242.5 851.5"/>
    <path d="M251.5 835.2 H248.5 Q247 835.2 247 836.7 V840"/>
    <path d="M247 852 V855.3 Q247 856.8 248.5 856.8 H251.5"/>
  </g>
  <!-- sliders -->
  <g stroke="#ffffff" stroke-width="2">
    <path d="M1190.8 28.5 V38.6 M1190.8 45 V49.5"/>
    <circle cx="1190.8" cy="41.8" r="3.2" stroke-width="1.7"/>
    <path d="M1199 28.5 V31.5 M1199 37.9 V49.5"/>
    <circle cx="1199" cy="34.7" r="3.2" stroke-width="1.7"/>
    <path d="M1206.7 28.5 V40.1 M1206.7 46.5 V49.5"/>
    <circle cx="1206.7" cy="43.3" r="3.2" stroke-width="1.7"/>
    <path d="M1353.2 38.8 L1358.5 44.6 L1363.8 38.8" stroke-width="2"/>
  </g>
  <!-- kebabs -->
  <g fill="#6b6c78">
    <circle cx="1321" cy="400.6" r="2.3"/><circle cx="1321" cy="407.3" r="2.3"/><circle cx="1321" cy="414" r="2.3"/>
    <circle cx="1321" cy="466.6" r="2.3"/><circle cx="1321" cy="473.3" r="2.3"/><circle cx="1321" cy="480" r="2.3"/>
    <circle cx="1321" cy="532" r="2.3"/><circle cx="1321" cy="538.7" r="2.3"/><circle cx="1321" cy="545.4" r="2.3"/>
  </g>
</svg>
</body></html>
